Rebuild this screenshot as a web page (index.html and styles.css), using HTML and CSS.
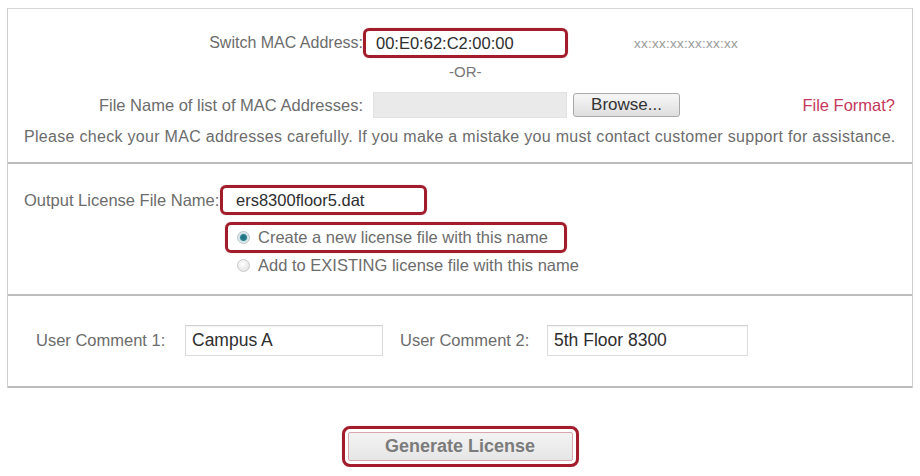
FILE: index.html
```html
<!DOCTYPE html>
<html>
<head>
<meta charset="utf-8">
<link rel="stylesheet" href="styles.css">
</head>
<body>
<div class="panel">
  <section class="sec sec-mac">
    <div class="row row-mac">
      <span class="lbl lbl-mac lbl-switch">Switch MAC Address:</span>
      <span class="hl hl-mac"><input class="val" type="text" value="00:E0:62:C2:00:00" readonly></span>
      <span class="hint">xx:xx:xx:xx:xx:xx</span>
    </div>
    <div class="or">-OR-</div>
    <div class="row row-file">
      <span class="lbl lbl-mac">File Name of list of MAC Addresses:</span>
      <span class="file-box"></span>
      <button class="browse" type="button">Browse...</button>
      <a class="fmt" href="#">File Format?</a>
    </div>
    <p class="note">Please check your MAC addresses carefully. If you make a mistake you must contact customer support for assistance.</p>
  </section>

  <section class="sec sec-out">
    <div class="out-grid">
      <span class="lbl lbl-out">Output License File Name:</span>
      <span class="hl hl-name"><input class="val" type="text" value="ers8300floor5.dat" readonly></span>
      <span></span>
      <label class="hl hl-radio radio-row"><span class="radio radio-on"></span><span class="rtext">Create a new license file with this name</span></label>
      <span></span>
      <label class="radio-row radio-row2"><span class="radio"></span><span class="rtext">Add to EXISTING license file with this name</span></label>
    </div>
  </section>

  <section class="sec sec-com">
    <span class="lbl lbl-c1">User Comment 1:</span>
    <input class="comment comment1" type="text" value="Campus A" readonly>
    <span class="lbl lbl-c2">User Comment 2:</span>
    <input class="comment comment2" type="text" value="5th Floor 8300" readonly>
  </section>
</div>

<div class="actions">
  <span class="hl hl-btn"><button class="gen" type="button">Generate License</button></span>
</div>
</body>
</html>
```

FILE: styles.css
```css
* { box-sizing: border-box; }

body {
  margin: 0;
  background: #ffffff;
  font-family: "Liberation Sans", Arial, sans-serif;
  color: #6a6a6a;
}

.panel {
  margin: 8px 0 0 7px;
  width: 906px;
  border-left: 1px solid #cfcfcf;
  border-right: 1px solid #cfcfcf;
  border-top: 1px solid #d6d6d6;
}

.sec {
  border-bottom: 2px solid #bdbdbd;
}

.lbl {
  font-size: 16.5px;
  color: #6c6c6c;
  white-space: nowrap;
}

.hl {
  display: inline-flex;
  align-items: center;
  border: 3px solid #a21c2c;
  border-radius: 6px;
  box-shadow: 0 0 1px rgba(160, 30, 40, 0.5);
}

.val {
  border: none;
  outline: none;
  background: transparent;
  font-family: "Liberation Sans", Arial, sans-serif;
  font-size: 16.5px;
  color: #2e2e2e;
  padding: 0;
  width: 100%;
}

/* section 1 */
.sec-mac {
  padding: 19px 17px 16px 16px;
  height: 155px;
}

.row {
  display: flex;
  align-items: center;
}

.row-mac { height: 30px; }

.lbl-mac {
  width: 339px;
  text-align: right;
}

.lbl-switch { font-size: 16px; }

.hl-mac {
  width: 205px;
  height: 30px;
  padding-left: 10px;
}

.hint {
  margin-left: 66px;
  font-size: 13.5px;
  color: #9a9a9a;
  letter-spacing: 0.25px;
}

.or {
  margin-top: 6px;
  height: 16px;
  line-height: 16px;
  font-size: 15px;
  color: #777777;
  padding-left: 425px;
}

.row-file {
  margin-top: 12px;
  height: 26px;
}

.file-box {
  margin-left: 10px;
  width: 194px;
  height: 26px;
  background: #eaeaea;
  border: 1px solid #e2e2e2;
}

.browse {
  margin-left: 6px;
  width: 107px;
  height: 24px;
  padding: 0;
  border: 1px solid #a9a9a9;
  border-radius: 3px;
  background: linear-gradient(#f7f7f7, #dedede);
  font-family: "Liberation Sans", Arial, sans-serif;
  font-size: 17px;
  color: #333333;
}

.fmt {
  margin-left: auto;
  font-size: 16.5px;
  color: #c4395c;
  text-decoration: none;
}

.note {
  margin: 10px 0 0 0;
  font-size: 16px;
  line-height: 18px;
  color: #6c6c6c;
  white-space: nowrap;
  letter-spacing: 0.3px;
}

/* section 2 */
.sec-out {
  padding: 21px 0 0 16px;
  height: 132px;
}

.out-grid {
  display: grid;
  grid-template-columns: 196px auto;
  justify-content: start;
}

.lbl-out {
  align-self: center;
}

.hl-name {
  width: 207px;
  height: 30px;
  padding-left: 13px;
}

.radio-row {
  display: flex;
  align-items: center;
  font-size: 16.5px;
  color: #6c6c6c;
  white-space: nowrap;
}

.hl-radio {
  margin: 7px 0 0 5px;
  width: 342px;
  height: 31px;
  padding-left: 9px;
}

.radio-row2 {
  margin: 3px 0 0 17px;
  height: 18px;
}

.radio {
  width: 13px;
  height: 13px;
  border-radius: 50%;
  border: 1px solid #c9c9c9;
  background: radial-gradient(circle at 40% 35%, #ffffff, #dcdcdc);
  margin-right: 8px;
  flex: none;
}

.radio-on {
  border-color: #b8c4c8;
  background: radial-gradient(circle, #1f6d7c 0, #2a7f90 3px, #cfe0e5 4px, #eef3f5 6px);
}

/* section 3 */
.sec-com {
  display: flex;
  align-items: center;
  padding: 29px 0 30px 28px;
  height: 92px;
}

.lbl-c1 { width: 149px; }

.lbl-c2 {
  margin-left: 17px;
  width: 147px;
}

.comment {
  height: 31px;
  border: 1px solid #dddddd;
  border-top-color: #d0d0d0;
  background: #ffffff;
  box-shadow: inset 0 1px 2px rgba(0, 0, 0, 0.05);
  padding: 0 0 0 6px;
  font-family: "Liberation Sans", Arial, sans-serif;
  font-size: 17.5px;
  color: #2e2e2e;
  outline: none;
}

.comment1 { width: 198px; }
.comment2 { width: 201px; }

/* action button */
.actions {
  margin: 38px 0 0 7px;
  width: 906px;
  display: flex;
  justify-content: center;
}

.hl-btn {
  width: 237px;
  height: 41px;
  border-radius: 8px;
  padding: 2px;
  justify-content: center;
}

.gen {
  width: 225px;
  height: 29px;
  padding: 0;
  border: 1px solid #d9a7ad;
  border-radius: 2px;
  background: linear-gradient(#f3f3f3, #e6e6e6);
  font-family: "Liberation Sans", Arial, sans-serif;
  font-size: 18px;
  font-weight: bold;
  color: #7b7b7b;
}
```
